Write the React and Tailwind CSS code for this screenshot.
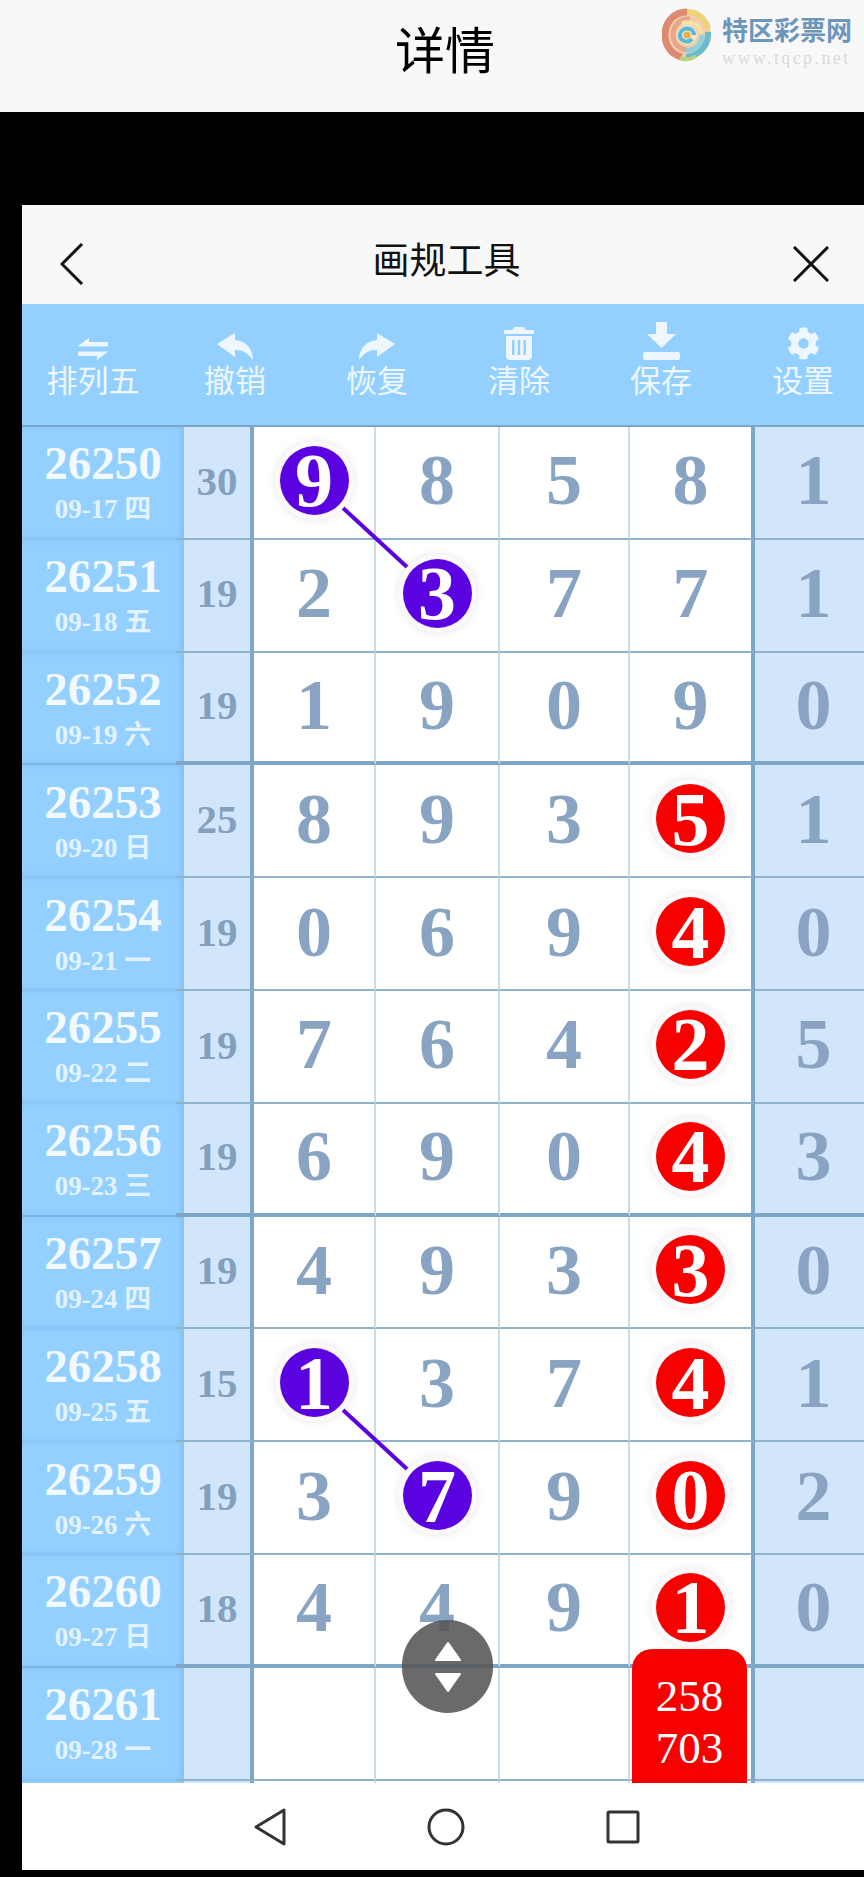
import React from 'react';
import { FaCog } from 'react-icons/fa';

const rows = [
  { id: '26250', date: '09-17 四', sum: '30', nums: [9, 8, 5, 8], last: 1, ball: { 0: 'purple' } },
  { id: '26251', date: '09-18 五', sum: '19', nums: [2, 3, 7, 7], last: 1, ball: { 1: 'purple' } },
  { id: '26252', date: '09-19 六', sum: '19', nums: [1, 9, 0, 9], last: 0, ball: {}, heavy: true },
  { id: '26253', date: '09-20 日', sum: '25', nums: [8, 9, 3, 5], last: 1, ball: { 3: 'red' } },
  { id: '26254', date: '09-21 一', sum: '19', nums: [0, 6, 9, 4], last: 0, ball: { 3: 'red' } },
  { id: '26255', date: '09-22 二', sum: '19', nums: [7, 6, 4, 2], last: 5, ball: { 3: 'red' } },
  { id: '26256', date: '09-23 三', sum: '19', nums: [6, 9, 0, 4], last: 3, ball: { 3: 'red' }, heavy: true },
  { id: '26257', date: '09-24 四', sum: '19', nums: [4, 9, 3, 3], last: 0, ball: { 3: 'red' } },
  { id: '26258', date: '09-25 五', sum: '15', nums: [1, 3, 7, 4], last: 1, ball: { 0: 'purple', 3: 'red' } },
  { id: '26259', date: '09-26 六', sum: '19', nums: [3, 7, 9, 0], last: 2, ball: { 1: 'purple', 3: 'red' } },
  { id: '26260', date: '09-27 日', sum: '18', nums: [4, 4, 9, 1], last: 0, ball: { 3: 'red' }, heavy: true },
  { id: '26261', date: '09-28 一', sum: '', nums: ['', '', '', ''], last: '', ball: {}, tab: true },
  { id: '', date: '', sum: '', nums: ['', '', '', ''], last: '', ball: {} },
];

const serif = "font-['Liberation_Serif','Noto_Sans_CJK_SC',serif]";

const Swap = () => (
  <svg width="30" height="22" viewBox="0 0 30 22" fill="currentColor">
    <path d="M0 8 L11 0 V4 H30 V8.5 H0 Z" />
    <path d="M0 13.5 H30 L19 22 V18 H0 Z" />
  </svg>
);

const Undo = ({ flip }) => (
  <svg width="36" height="27" viewBox="0 0 36 27" fill="currentColor" className={flip ? '-scale-x-100' : ''}>
    <path d="M0 11 L18 0 V7 C29 8 36 16 36 27 C31 20 26 17 18 17 V24 Z" />
  </svg>
);

const Trash = () => (
  <svg width="30" height="33" viewBox="0 0 30 33" fill="currentColor">
    <path d="M10 0 H20 L21.5 3 H30 V7 H0 V3 H8.5 Z" />
    <path
      fillRule="evenodd"
      d="M2 9 H28 V29 C28 31.5 26.5 33 24 33 H6 C3.5 33 2 31.5 2 29 Z M8 13 V28 H10.5 V13 Z M13.8 13 V28 H16.2 V13 Z M19.5 13 V28 H22 V13 Z"
    />
  </svg>
);

const Download = () => (
  <svg width="37" height="38" viewBox="0 0 37 38" fill="currentColor">
    <path d="M13 0 H24 V12 H33 L18.5 26 L4 12 H13 Z" />
    <rect x="0" y="30" width="37" height="8" rx="2" />
  </svg>
);

const tools = [
  { label: '排列五', icon: <Swap /> },
  { label: '撤销', icon: <Undo /> },
  { label: '恢复', icon: <Undo flip /> },
  { label: '清除', icon: <Trash /> },
  { label: '保存', icon: <Download /> },
  { label: '设置', icon: <FaCog size={33} /> },
];

const Logo = () => (
  <svg width="50" height="54" viewBox="0 0 50 54" fill="none">
    <circle cx="25" cy="27" r="24" fill="#f0cfa8" />
    <path d="M25 4 C11 4 3 15 3 27 C3 38 10 47 20 49" stroke="#dc8a70" strokeWidth="7" />
    <path d="M25 4 C36 4 44 11 46 21" stroke="#efd27a" strokeWidth="6" />
    <path d="M46 24 C47 36 38 48 24 49" stroke="#68bcd0" strokeWidth="6" />
    <path d="M18 50 C24 52 30 51 34 48" stroke="#b9d27e" strokeWidth="4" />
    <path d="M28 11 C18 10 11 18 11 27 C11 35 17 41 24 42" stroke="#e8a58c" strokeWidth="5" />
    <path d="M24 42 C33 43 40 36 40 27" stroke="#8fcfe0" strokeWidth="5" />
    <path d="M20 15 C30 12 39 18 39 25" stroke="#f6e3ae" strokeWidth="4" />
    <circle cx="25" cy="27" r="10" fill="#f3e6c0" />
    <path d="M32 27 C32 19 20 18 18 26 C17 33 26 36 30 31" stroke="#58b7dc" strokeWidth="4" />
    <circle cx="25" cy="27" r="3.5" fill="#e6b04f" />
  </svg>
);

const Ball = ({ color, value }) => (
  <div
    className={`relative z-10 flex h-[69px] w-[69px] items-center justify-center rounded-full text-[76px] leading-none text-white shadow-[0_0_0_5px_#fdf8fb,0_0_6px_6px_rgba(120,120,120,0.15)] ${
      color === 'red' ? 'bg-[#f60000]' : 'bg-[#5a03e0]'
    }`}
  >
    {value}
  </div>
);

const Row = ({ row }) => {
  const line = row.heavy ? 'border-b-4 border-[#7ca7c8]' : 'border-b-2 border-[#8fb3ca]';
  const stub = row.heavy
    ? 'before:h-[4px] before:-bottom-[4px] before:bg-[#7ca7c8]'
    : 'before:h-[2px] before:-bottom-[2px] before:bg-[#8fb3ca]';

  return (
    <div className={`grid h-[112.8px] grid-cols-[162px_70px_122px_124px_130px_125px_109px] ${serif} font-bold`}>
      <div className={`flex flex-col items-center justify-center bg-[#93d0ff] text-[#f2f9ff] shadow-[inset_-4px_0_4px_rgba(100,160,210,0.25)] border-b-2 ${row.heavy ? 'border-[#7fb6e0]' : 'border-[#8bc6f4]'}`}>
        <div className="-mt-[2px] text-[47px] leading-[50px]">{row.id}</div>
        <div className="mt-[6px] text-[27px] leading-[30px] text-[#e3f2ff]">{row.date}</div>
      </div>
      <div className={`relative flex items-center justify-center border-r-4 border-r-[#7ca7c8] bg-[#d2e6fb] text-[41px] text-[#83a0be] before:absolute before:-left-[8px] before:w-[8px] before:content-[''] ${stub} ${line}`}>
        <span className="-mt-[2px]">{row.sum}</span>
      </div>
      {row.nums.map((n, i) => (
        <div
          key={i}
          className={`relative flex items-center justify-center bg-white pb-[4px] text-[72px] leading-none text-[#89a3c2] ${line} ${
            i === 3 ? 'border-r-4 border-r-[#7ca7c8]' : 'border-r-2 border-r-[#cbdce6]'
          }`}
        >
          {row.ball[i] ? <Ball color={row.ball[i]} value={n} /> : <span>{n}</span>}
          {row.tab && i === 3 && (
            <div className="absolute -top-[19px] left-[2px] z-20 flex h-[140px] w-[115px] flex-col items-center rounded-t-[20px] bg-[#f60000] pt-[21px] text-[45px] font-normal leading-[52px] text-white">
              <span>258</span>
              <span>703</span>
            </div>
          )}
        </div>
      ))}
      <div className={`flex items-center justify-center bg-[#d2e6fb] pb-[4px] pl-[8px] text-[72px] leading-none text-[#89a3c2] ${line}`}>
        {row.last}
      </div>
    </div>
  );
};

export default function App() {
  return (
    <div className="flex h-[1877px] w-[864px] flex-col overflow-hidden bg-black font-['Noto_Sans_CJK_SC',sans-serif]">
      {/* page header */}
      <header className="relative flex h-[112px] items-center justify-center bg-[#f8f8f8]">
        <h1 className="-mt-[18px] translate-x-[13px] text-[50px] leading-none text-black">详情</h1>
        <div className="absolute left-[662px] top-[8px] flex gap-[10px]">
          <Logo />
          <div className="mt-[6px] flex flex-col">
            <span className="whitespace-nowrap text-[26px] font-bold leading-[29px] text-[#6c96ba]">特区彩票网</span>
            <span className="mt-[6px] whitespace-nowrap font-['Liberation_Serif',serif] text-[18px] leading-[18px] tracking-[2.4px] text-[#d8dbde]">www.tqcp.net</span>
          </div>
        </div>
      </header>

      <div className="mt-[93px] ml-[22px] flex flex-1 flex-col">
        {/* tool title */}
        <div className="flex h-[99px] items-center justify-between bg-[#f8f8f8] pl-[38px] pr-[35px]">
          <svg className="mt-[18px]" width="24" height="42" viewBox="0 0 24 42" fill="none" stroke="#111" strokeWidth="3">
            <path d="M22 1 L2 21 L22 41" />
          </svg>
          <div className="ml-[16px] mt-[7px] text-[37px] leading-none text-[#111]">画规工具</div>
          <svg className="mt-[18px]" width="36" height="36" viewBox="0 0 36 36" fill="none" stroke="#111" strokeWidth="3">
            <path d="M1 1 L35 35 M35 1 L1 35" />
          </svg>
        </div>

        {/* toolbar, six 142px slots that run past the right edge */}
        <div className="grid h-[123px] grid-cols-[repeat(6,142px)] overflow-hidden border-b-2 border-[#7ca7c8] bg-[#93d0ff]">
          {tools.map((tool) => (
            <div key={tool.label} className="flex flex-col items-center text-[#eef7ff]">
              <div className="flex h-[60px] items-end pb-[4px]">{tool.icon}</div>
              <div className="text-[31px] leading-[30px]">{tool.label}</div>
            </div>
          ))}
        </div>

        {/* number table */}
        <div className="relative h-[1356px] overflow-hidden">
          {rows.map((row, i) => (
            <Row key={i} row={row} />
          ))}
          <svg className="absolute left-0 top-0 z-[5]" width="842" height="1356" fill="none" stroke="#5a03e0" strokeWidth="4">
            <path d="M321 81 L385 140" />
            <path d="M321 983 L385 1042" />
          </svg>
          <div className="absolute left-[380px] top-[1193px] z-30 flex h-[93px] w-[91px] flex-col items-center justify-center gap-[12px] rounded-full bg-[rgba(85,85,85,0.88)]">
            <svg width="26" height="20" viewBox="0 0 26 20" fill="#fff" stroke="#fff" strokeWidth="2" strokeLinejoin="round">
              <path d="M13 2 L25 19 H1 Z" />
            </svg>
            <svg width="26" height="20" viewBox="0 0 26 20" fill="#fff" stroke="#fff" strokeWidth="2" strokeLinejoin="round">
              <path d="M13 18 L25 1 H1 Z" />
            </svg>
          </div>
        </div>

        {/* android nav */}
        <nav className="flex h-[87px] items-center gap-[141px] bg-white pl-[232px] text-[#333]">
          <svg width="32" height="38" viewBox="0 0 32 38" fill="none" stroke="currentColor" strokeWidth="3" strokeLinejoin="round">
            <path d="M30 2 V36 L2 19 Z" />
          </svg>
          <svg width="38" height="38" viewBox="0 0 38 38" fill="none" stroke="currentColor" strokeWidth="3">
            <circle cx="19" cy="19" r="17" />
          </svg>
          <svg width="34" height="34" viewBox="0 0 34 34" fill="none" stroke="currentColor" strokeWidth="3" strokeLinejoin="round">
            <rect x="2" y="2" width="30" height="30" rx="1" />
          </svg>
        </nav>
        <div className="h-[7px] bg-black" />
      </div>
    </div>
  );
}
